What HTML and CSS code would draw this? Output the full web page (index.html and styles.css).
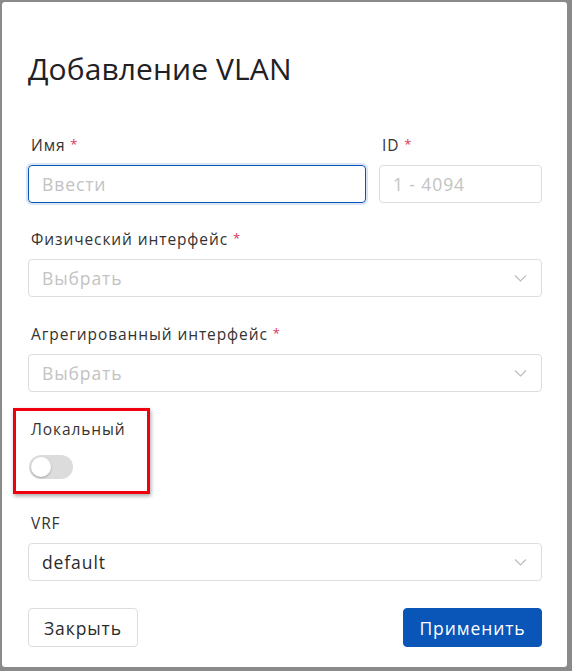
FILE: index.html
```html
<!DOCTYPE html>
<html lang="ru">
<head>
<meta charset="utf-8">
<title>Добавление VLAN</title>
<link rel="stylesheet" href="styles.css">
</head>
<body>
<div class="page">
  <div class="modal">
    <h1 class="title">Добавление VLAN</h1>
    <div class="row">
      <div class="field grow">
        <label class="label">Имя <span class="req">*</span></label>
        <div class="input focused"><span class="placeholder">Ввести</span></div>
      </div>
      <div class="field id-field">
        <label class="label">ID <span class="req">*</span></label>
        <div class="input"><span class="placeholder">1 - 4094</span></div>
      </div>
    </div>
    <div class="field">
      <label class="label">Физический интерфейс <span class="req">*</span></label>
      <div class="input select"><span class="placeholder">Выбрать</span>
        <svg class="chev" width="13" height="8" viewBox="0 0 13 8"><path d="M1 1.5l5.5 5.5 5.5-5.5" fill="none" stroke="#b9bbc1" stroke-width="1.1"/></svg>
      </div>
    </div>
    <div class="field">
      <label class="label">Агрегированный интерфейс <span class="req">*</span></label>
      <div class="input select"><span class="placeholder">Выбрать</span>
        <svg class="chev" width="13" height="8" viewBox="0 0 13 8"><path d="M1 1.5l5.5 5.5 5.5-5.5" fill="none" stroke="#b9bbc1" stroke-width="1.1"/></svg>
      </div>
    </div>
    <div class="field local">
      <div class="highlight"></div>
      <label class="label">Локальный</label>
      <div class="toggle"><span class="knob"></span></div>
    </div>
    <div class="field">
      <label class="label">VRF</label>
      <div class="input select"><span class="value">default</span>
        <svg class="chev" width="13" height="8" viewBox="0 0 13 8"><path d="M1 1.5l5.5 5.5 5.5-5.5" fill="none" stroke="#b9bbc1" stroke-width="1.1"/></svg>
      </div>
    </div>
    <div class="actions">
      <button class="btn">Закрыть</button>
      <button class="btn primary">Применить</button>
    </div>
  </div>
</div>
</body>
</html>
```
FILE: styles.css
```css
* { box-sizing: border-box; }
html, body { margin: 0; padding: 0; }
body {
  background: #8a8a8a;
  font-family: "Open Sans", "DejaVu Sans", sans-serif;
  color: #2b2b2b;
}
.page {
  width: 572px;
  height: 671px;
  padding: 2px 5px 4px 2px;
}
.modal {
  background: #fff;
  width: 565px;
  height: 665px;
  border-radius: 3px;
  padding: 45px 25px 20px 26px;
  display: flex;
  flex-direction: column;
}
.title {
  margin: 0;
  font-size: 30px;
  font-weight: 400;
  line-height: 44px;
  color: #1f2124;
  letter-spacing: 0.1px;
}
.row {
  display: flex;
  gap: 13px;
  margin-top: 44px;
  margin-bottom: 26px;
}
.grow { flex: 1; }
.id-field { width: 163px; }
.field {
  display: flex;
  flex-direction: column;
  gap: 10px;
  margin-bottom: 27px;
}
.row .field { margin-bottom: 0; }
.label {
  display: block;
  height: 20px;
  font-size: 15.5px;
  line-height: 20px;
  color: #333;
  padding-left: 3px;
  letter-spacing: 0.9px;
}
.req {
  color: #d8355a;
  font-size: 13px;
  line-height: 0;
  vertical-align: 2px;
  letter-spacing: 0;
}
.input {
  height: 38px;
  border: 1px solid #dcdde2;
  border-radius: 4px;
  display: flex;
  align-items: center;
  padding: 0 13px;
  font-size: 17.5px;
  letter-spacing: 0.9px;
  position: relative;
}
.input.focused {
  border: 1.5px solid #0a55b8;
  box-shadow: 0 0 0 2px #d9e5f5;
}
.placeholder { color: #c3c3c3; }
.value { color: #2b2b2b; }
.select { justify-content: space-between; }
.chev { margin-right: 1px; }
.local { position: relative; gap: 16px; margin-bottom: 34px; }
.highlight {
  position: absolute;
  left: -15px;
  top: -11px;
  width: 137px;
  height: 86px;
  border: 3px solid #f0000f;
  box-shadow: 1px 2px 4px rgba(0,0,0,0.35);
  pointer-events: none;
}
.toggle {
  width: 44px;
  height: 24px;
  border-radius: 12px;
  background: #dcdcdc;
  margin-left: 1px;
  position: relative;
}
.knob {
  position: absolute;
  left: 2px;
  top: 2px;
  width: 20px;
  height: 20px;
  border-radius: 50%;
  background: #fff;
  box-shadow: 0 1px 2px rgba(0,0,0,0.25);
}
.actions {
  display: flex;
  justify-content: space-between;
}
.btn {
  font-family: inherit;
  font-size: 17.5px;
  letter-spacing: 0.9px;
  height: 39px;
  padding: 0 15px;
  border: 1px solid #dcdde2;
  background: #fff;
  color: #2b2b2b;
  border-radius: 4px;
}
.btn.primary {
  background: #0a55b8;
  border-color: #0a55b8;
  color: #fff;
  width: 139px;
}
```
